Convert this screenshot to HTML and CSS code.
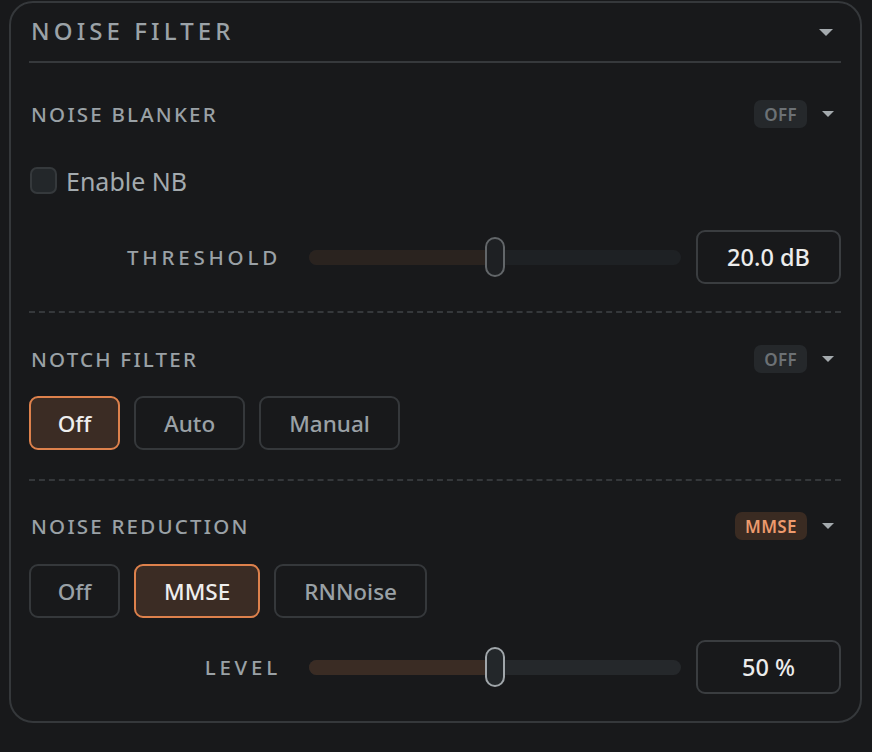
FILE: index.html
```html
<!DOCTYPE html>
<html>
<head>
<meta charset="utf-8">
<link rel="stylesheet" href="styles.css">
</head>
<body>
<div class="panel">
  <div class="panel-head">
    <span class="panel-title">NOISE FILTER</span>
    <svg class="caret caret-lg" viewBox="0 0 14 7"><path d="M0 0h14L7 7z"/></svg>
  </div>

  <section class="sec sec-nb">
    <div class="sec-head">
      <span class="sec-title">NOISE BLANKER</span>
      <span class="badge">OFF</span>
      <svg class="caret" viewBox="0 0 12 6"><path d="M0 0h12L6 6z"/></svg>
    </div>
    <label class="check-row">
      <span class="check"></span>
      <span class="check-text">Enable NB</span>
    </label>
    <div class="slider-row">
      <span class="slider-label">THRESHOLD</span>
      <div class="slider dim">
        <div class="slider-fill" style="width:50%"></div>
        <div class="slider-thumb" style="left:50%"></div>
      </div>
      <div class="value-box">20.0 dB</div>
    </div>
  </section>

  <section class="sec sec-notch">
    <div class="sec-head">
      <span class="sec-title">NOTCH FILTER</span>
      <span class="badge">OFF</span>
      <svg class="caret" viewBox="0 0 12 6"><path d="M0 0h12L6 6z"/></svg>
    </div>
    <div class="seg">
      <button class="seg-btn active">Off</button>
      <button class="seg-btn">Auto</button>
      <button class="seg-btn">Manual</button>
    </div>
  </section>

  <section class="sec sec-nr">
    <div class="sec-head">
      <span class="sec-title">NOISE REDUCTION</span>
      <span class="badge badge-on">MMSE</span>
      <svg class="caret" viewBox="0 0 12 6"><path d="M0 0h12L6 6z"/></svg>
    </div>
    <div class="seg">
      <button class="seg-btn">Off</button>
      <button class="seg-btn active">MMSE</button>
      <button class="seg-btn">RNNoise</button>
    </div>
    <div class="slider-row">
      <span class="slider-label">LEVEL</span>
      <div class="slider">
        <div class="slider-fill" style="width:50%"></div>
        <div class="slider-thumb" style="left:50%"></div>
      </div>
      <div class="value-box">50 %</div>
    </div>
  </section>
</div>
</body>
</html>
```

FILE: styles.css
```css
html, body {
  margin: 0;
  background: #18191b;
}

body {
  font-family: "Noto Sans", "DejaVu Sans", sans-serif;
  color: #9aa1a6;
}

.panel {
  box-sizing: border-box;
  width: 853px;
  height: 722px;
  margin: 1px 0 0 9px;
  border: 2px solid #35383b;
  border-radius: 24px;
  padding: 0 19px 0 18px;
  display: flex;
  flex-direction: column;
}

.panel-head {
  height: 60px;
  box-sizing: border-box;
  padding: 0 8px 3px 2px;
  border-bottom: 2px solid #36393c;
  display: flex;
  align-items: center;
  justify-content: space-between;
  flex: none;
}

.panel-title {
  font-size: 24px;
  font-weight: 500;
  letter-spacing: 4.1px;
  color: #9ba2a7;
}

.caret {
  width: 12px;
  height: 6px;
  fill: #a4aaae;
  flex: none;
}

.caret-lg {
  width: 14px;
  height: 7px;
  margin-top: 3px;
}

.sec {
  display: flex;
  flex-direction: column;
}

.sec-nb {
  padding-top: 37px;
  padding-bottom: 27px;
  border-bottom: 2px dashed #35383b;
}

.sec-notch {
  padding-top: 32px;
  padding-bottom: 29px;
  border-bottom: 2px dashed #35383b;
}

.sec-nr {
  padding-top: 31px;
}

.sec-head {
  height: 28px;
  display: flex;
  align-items: center;
  padding: 0 7px 0 2px;
}

.sec-title {
  flex: 1;
  font-size: 20.5px;
  font-weight: 500;
  letter-spacing: 2.2px;
  color: #9aa1a6;
}

.badge {
  height: 28px;
  box-sizing: border-box;
  padding: 0 10px;
  display: flex;
  align-items: center;
  border-radius: 7px;
  background: #25282b;
  color: #6c7175;
  font-size: 17px;
  font-weight: 600;
  letter-spacing: 0.4px;
  margin-right: 15px;
}

.badge-on {
  background: #3a2b22;
  color: #ec9a6d;
}

.check-row {
  margin-top: 39px;
  display: flex;
  align-items: center;
  gap: 9px;
  height: 27px;
  padding-left: 1px;
}

.check {
  width: 27px;
  height: 27px;
  box-sizing: border-box;
  border: 2px solid #35393c;
  border-radius: 7px;
  background: #23272a;
  flex: none;
}

.check-text {
  font-size: 25px;
  color: #a3aaae;
}

.slider-row {
  display: flex;
  align-items: center;
  height: 54px;
}

.sec-nb .slider-row {
  margin-top: 36px;
}

.sec-nr .slider-row {
  margin-top: 22px;
}

.slider-label {
  width: 253px;
  text-align: right;
  font-size: 20.5px;
  font-weight: 500;
  letter-spacing: 3.8px;
  margin-right: 28px;
  color: #9aa1a6;
}

.slider {
  position: relative;
  width: 372px;
  height: 15px;
  border-radius: 8px;
  background: #25282b;
  margin-right: 15px;
  flex: none;
}

.slider.dim {
  opacity: 0.55;
}

.slider-fill {
  height: 100%;
  border-radius: 8px 0 0 8px;
  background: #3a2c24;
}

.slider-thumb {
  position: absolute;
  top: 50%;
  width: 20px;
  height: 40px;
  box-sizing: border-box;
  margin: -20px 0 0 -10px;
  border: 2px solid #a0a6aa;
  border-radius: 10px;
  background: #23272a;
}

.value-box {
  width: 145px;
  height: 54px;
  box-sizing: border-box;
  border: 2px solid #3a3d40;
  border-radius: 9px;
  display: flex;
  align-items: center;
  justify-content: center;
  font-size: 23.5px;
  font-weight: 500;
  color: #ececec;
  flex: none;
}

.seg {
  display: flex;
  gap: 14px;
  margin-top: 23px;
}

.sec-nr .seg {
  margin-top: 24px;
}

.seg-btn {
  height: 54px;
  box-sizing: border-box;
  padding: 0 28px;
  min-width: 91px;
  border: 2px solid #35383b;
  border-radius: 9px;
  background: transparent;
  font-family: inherit;
  font-size: 22.5px;
  font-weight: 500;
  color: #9aa1a6;
}

.seg-btn:first-child {
  padding: 0 26px;
}

.seg-btn.active {
  border-color: #dd814c;
  background: #3b2c24;
  color: #eeeeee;
}
```
